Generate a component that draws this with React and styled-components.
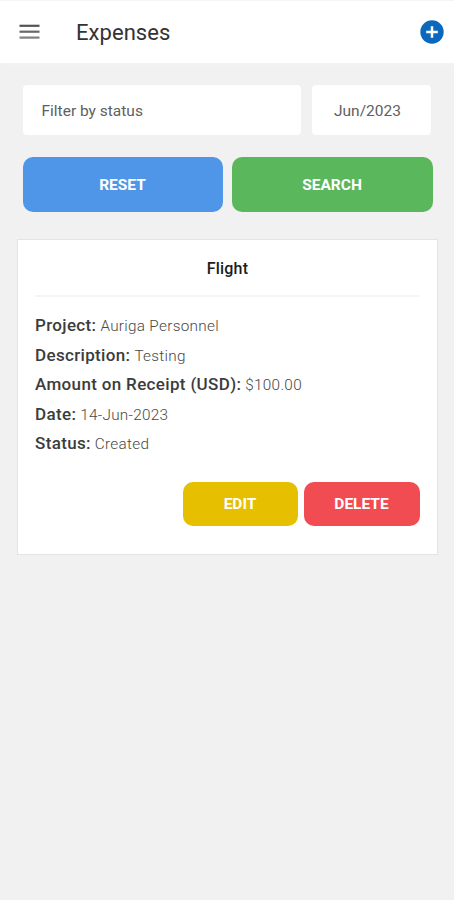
import React from 'react'
import styled, { createGlobalStyle } from "styled-components";

const GlobalStyle = createGlobalStyle`
  * {
    box-sizing: border-box;
  }
  body {
    margin: 0;
    background-color: #f1f1f1;
    font-family: Roboto, "Liberation Sans", sans-serif;
  }
`;
const Container = styled.div`
  width: 100%;
  min-height: 100vh;
  background-color: #f1f1f1;
`;
const Header = styled.header`
  height: 63px;
  padding: 0 10px 0 19px;
  border-top: 1px solid #f5f5f5;
  background-color: #ffffff;
  box-shadow: 0 1px 2px #f4f4f4;
  display: flex;
  align-items: center;
`;
const IconButton = styled.button`
  padding: 0;
  border: none;
  background: none;
  display: flex;
`;
const Title = styled.h1`
  flex: 1;
  margin: 0 0 0 35px;
  padding-top: 2px;
  font-size: 22px;
  font-weight: 400;
  line-height: 28px;
  letter-spacing: 0.05px;
  color: #333333;
`;
const Filters = styled.div`
  padding: 22px 23px 0;
  display: flex;
  gap: 11px;
`;
const Field = styled.div`
  width: ${({ $width }) => $width};
  height: 50px;
  padding-left: ${({ $indent }) => $indent};
  padding-top: 1px;
  border-radius: 4px;
  background-color: #ffffff;
  display: flex;
  align-items: center;
  font-size: 15.5px;
  color: #606060;
`;
const Actions = styled.div`
  padding: 22px 21px 0 23px;
  display: flex;
  gap: 9px;
`;
const Button = styled.button`
  width: ${({ $width }) => $width || "auto"};
  flex: ${({ $width }) => ($width ? "none" : 1)};
  height: ${({ $height }) => $height};
  padding: 1px 1px 0 0;
  border: none;
  border-radius: 10px;
  background-color: ${({ $color }) => $color};
  font-family: inherit;
  font-size: 15.5px;
  font-weight: 700;
  color: #ffffff;
`;
const Card = styled.section`
  margin: 27px 16px 0 17px;
  height: 316px;
  padding: 0 17px;
  border: 1px solid #e2e4e6;
  background-color: #ffffff;
`;
const CardTitle = styled.h2`
  height: 57px;
  margin: 0;
  padding-top: 2px;
  border-bottom: 2px solid #f5f5f5;
  font-size: 16px;
  font-weight: 500;
  line-height: 54px;
  letter-spacing: 0.2px;
  text-align: center;
  color: #1c1c1c;
`;
const Details = styled.div`
  padding-top: 14px;
`;
const Row = styled.div`
  height: 29.5px;
  line-height: 29px;
  font-size: 16px;
  white-space: nowrap;
  color: #6c6c6c;
`;
const Label = styled.span`
  font-size: 17px;
  font-weight: 500;
  letter-spacing: 0.34px;
  color: #3c3c3c;
`;
const Value = styled.span`
  font-size: 15.3px;
  font-weight: 300;
  letter-spacing: 0.3px;
  color: #484848;
`;
const CardActions = styled.div`
  padding-top: 23px;
  display: flex;
  justify-content: flex-end;
  gap: 6px;
`;

const details = [
    { label: "Project", value: "Auriga Personnel" },
    { label: "Description", value: "Testing" },
    { label: "Amount on Receipt (USD)", value: "$100.00" },
    { label: "Date", value: "14-Jun-2023" },
    { label: "Status", value: "Created" },
]


function App() {
    return (
        <>
            <GlobalStyle />
            <Container>
                <Header>
                    <IconButton aria-label="Menu">
                        <svg width="22" height="16" viewBox="0 0 22 16">
                            <rect x="0.5" y="0.7" width="20" height="2.2" fill="#555555" />
                            <rect x="0.5" y="6.6" width="20" height="2.2" fill="#686868" />
                            <rect x="0.5" y="12.5" width="20" height="2.2" fill="#808080" />
                        </svg>
                    </IconButton>
                    <Title>Expenses</Title>
                    <IconButton aria-label="Add">
                        <svg width="24" height="24" viewBox="0 0 24 24">
                            <circle cx="12" cy="12" r="11.7" fill="#0c68bd" />
                            <path d="M12 6.2v11.6M6.2 12h11.6" stroke="#ffffff" strokeWidth="2.5" />
                        </svg>
                    </IconButton>
                </Header>

                {/* Filters */}

                <Filters>
                    <Field $width="278px" $indent="18.5px">Filter by status</Field>
                    <Field $width="119px" $indent="22px">Jun/2023</Field>
                </Filters>
                <Actions>
                    <Button $width="200px" $height="55px" $color="#4f96e8">RESET</Button>
                    <Button $height="55px" $color="#5ab75c">SEARCH</Button>
                </Actions>

                {/* Expense Card */}

                <Card>
                    <CardTitle>Flight</CardTitle>
                    <Details>
                        {details.map(({ label, value }) => (
                            <Row key={label}>
                                <Label>{label}:</Label> <Value>{value}</Value>
                            </Row>
                        ))}
                    </Details>
                    <CardActions>
                        <Button $width="115px" $height="44px" $color="#e5bf00">EDIT</Button>
                        <Button $width="116px" $height="44px" $color="#f24c53">DELETE</Button>
                    </CardActions>
                </Card>
            </Container>
        </>
    )
}

export default App;
